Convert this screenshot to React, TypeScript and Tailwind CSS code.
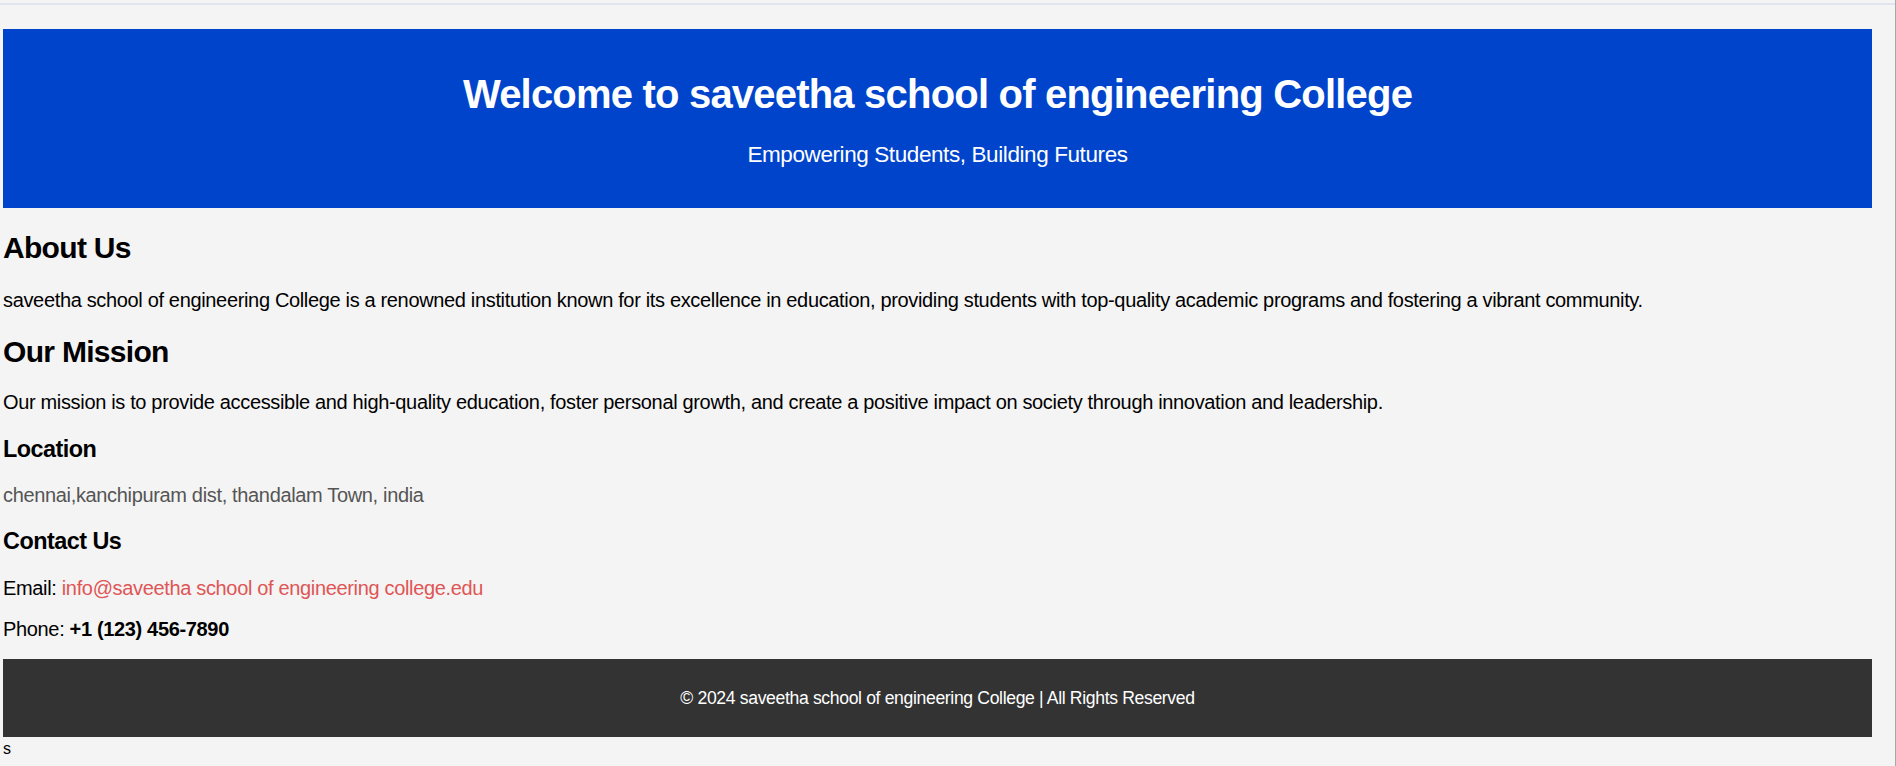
export default function App() {
  return (
    <div className="min-h-[766px] w-full bg-[#f4f4f4] border-r border-[#a8a8a8] font-['Liberation_Sans',Arial,sans-serif] text-black">
      <div className="pt-[3px]">
        <div className="h-[2px] bg-[#e1e3ef]" />
      </div>
      <div className="pl-[3px] w-[1872px]">
        <header className="mt-[24px] bg-[#0044cc] text-white text-center pt-[42px] pb-[41px]">
          <h1 className="text-[40px] leading-[46px] font-bold tracking-[-0.02em]">Welcome to saveetha school of engineering College</h1>
          <p className="mt-[25px] text-[22.5px] leading-[25px] tracking-[-0.018em]">Empowering Students, Building Futures</p>
        </header>
        <section>
          <h2 className="mt-[23px] text-[30px] leading-[34.5px] font-bold tracking-[-0.023em]">About Us</h2>
          <p className="mt-[23px] text-[20px] leading-[23px] tracking-[-0.017em]">
            saveetha school of engineering College is a renowned institution known for its excellence in education, providing students with top-quality academic programs and fostering a vibrant community.
          </p>
        </section>
        <section>
          <h2 className="mt-[23px] text-[30px] leading-[34.5px] font-bold tracking-[-0.023em]">Our Mission</h2>
          <p className="mt-[22px] text-[20px] leading-[23px] tracking-[-0.017em]">
            Our mission is to provide accessible and high-quality education, foster personal growth, and create a positive impact on society through innovation and leadership.
          </p>
        </section>
        <section>
          <h3 className="mt-[22px] text-[23.4px] leading-[27px] font-bold tracking-[-0.022em]">Location</h3>
          <p className="mt-[21px] text-[20px] leading-[23px] text-[#555555] tracking-[-0.017em]">chennai,kanchipuram dist, thandalam Town, india</p>
        </section>
        <section>
          <h3 className="mt-[21px] text-[23.4px] leading-[27px] font-bold tracking-[-0.022em]">Contact Us</h3>
          <p className="mt-[22px] text-[20px] leading-[23px] tracking-[-0.017em]">
            Email: <a className="text-[#e05555]">info@saveetha school of engineering college.edu</a>
          </p>
          <p className="mt-[18px] text-[20px] leading-[23px] tracking-[-0.017em]">
            Phone: <strong className="font-bold">+1 (123) 456-7890</strong>
          </p>
        </section>
        <footer className="mt-[18px] h-[78px] bg-[#333333] text-white flex items-center justify-center">
          <p className="text-[17.6px] leading-[21px] tracking-[-0.02em]">© 2024 saveetha school of engineering College | All Rights Reserved</p>
        </footer>
        <div className="text-[16px] leading-[23px]">s</div>
      </div>
    </div>
  );
}
